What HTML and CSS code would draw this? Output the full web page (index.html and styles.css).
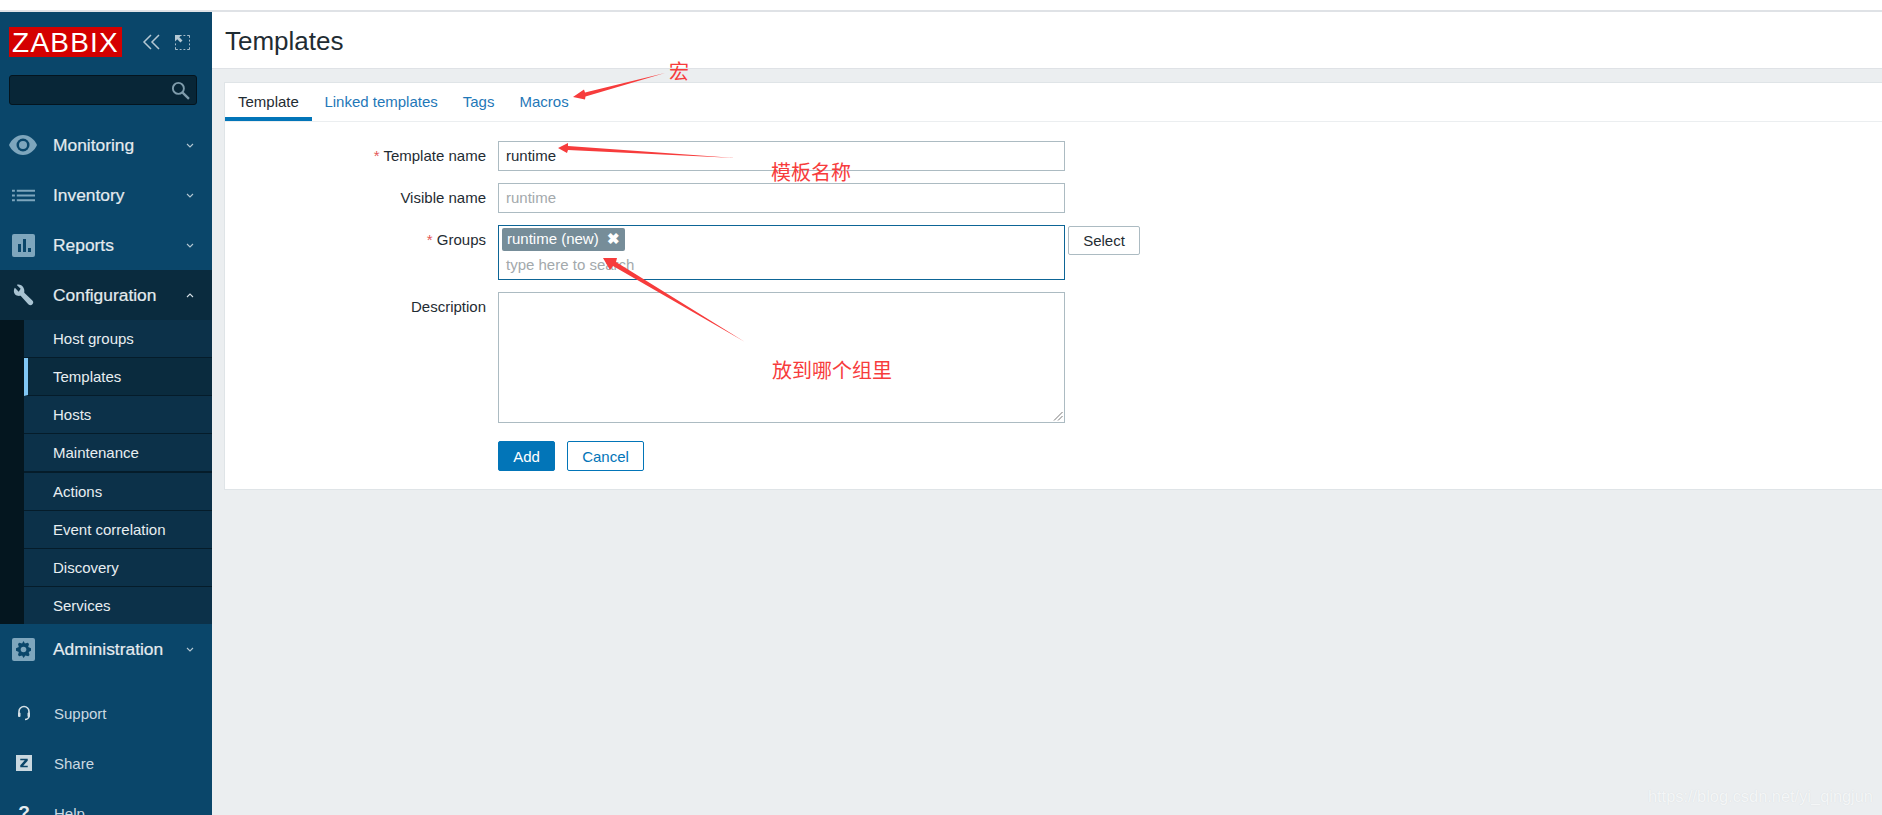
FILE: index.html
```html
<!DOCTYPE html>
<html>
<head>
    <title>Templates</title>
    <link rel="stylesheet" href="styles.css">
</head>
<body>
    <div class="top-strip"></div>
    <div class="layout">
        <!-- sidebar -->
        <div class="sidebar">
            <div class="brand">
                <span class="logo">ZABBIX</span>
                <svg class="brand-icon collapse" viewBox="0 0 20 16"><path d="M9 1 2 8 9 15M17 1 10 8 17 15" fill="none" stroke="#b5c8d3" stroke-width="1.500"/></svg>
                <svg class="brand-icon expand" viewBox="0 0 16 16"><path d="M5 .5h2M9 .5h2M13 .5h2.500V3M15.500 5v2M15.500 9v2M15.500 13v2.500H13M11 15.500H9M7 15.500H5M3 15.500H.5V13M.5 11V9" fill="none" stroke="#b5c8d3"/><path d="M0 0h7L4.600 2.400 8 5.800 5.800 8 2.400 4.600 0 7z" fill="#b5c8d3"/></svg>
            </div>
            <div class="search">
                <svg viewBox="0 0 18 18"><circle cx="7" cy="7" r="5.200" fill="none" stroke="#7f9cac" stroke-width="1.800"/><path d="m11 11 6 6" stroke="#7f9cac" stroke-width="2.200"/></svg>
            </div>

            <div class="nav-item first">
                <svg class="nav-icon" viewBox="0 0 28 20"><path d="M14 0C7.500 0 2.500 4.500 0 10c2.500 5.500 7.500 10 14 10s11.500-4.500 14-10C25.500 4.500 20.500 0 14 0z" fill="#7ea6bd"/><circle cx="14" cy="10" r="6.500" fill="#0a466a"/><circle cx="14" cy="10" r="4" fill="#7ea6bd"/></svg>
                <span class="nav-label">Monitoring</span>
                <svg class="chev" viewBox="0 0 8 5"><path d="m1 1 3 3 3-3" fill="none" stroke="#b5c8d3" stroke-width="1.100"/></svg>
            </div>
            <div class="nav-item">
                <svg class="nav-icon square" viewBox="0 0 24 14"><path d="M0 1h3v2H0zM0 6h3v2H0zM0 11h3v2H0zM5 1h19v2H5zM5 6h19v2H5zM5 11h19v2H5z" fill="#7ea6bd"/></svg>
                <span class="nav-label">Inventory</span>
                <svg class="chev" viewBox="0 0 8 5"><path d="m1 1 3 3 3-3" fill="none" stroke="#b5c8d3" stroke-width="1.100"/></svg>
            </div>
            <div class="nav-item">
                <svg class="nav-icon square" viewBox="0 0 23 23"><rect width="23" height="23" rx="2" fill="#7ea6bd"/><path d="M6 10h3v8H6zM11 5h3v13h-3zM16 14h3v4h-3z" fill="#0a466a"/></svg>
                <span class="nav-label">Reports</span>
                <svg class="chev" viewBox="0 0 8 5"><path d="m1 1 3 3 3-3" fill="none" stroke="#b5c8d3" stroke-width="1.100"/></svg>
            </div>
            <div class="nav-item open">
                <svg class="nav-icon square" viewBox="0 0 24 24"><path d="M5 1 9 5 7 8 3 4C1 7 2 11 5 12c2 .7 3 .3 4 .3L17 21c1.500 1.500 3 1.500 4.300.2 1.200-1.200 1.200-2.800-.3-4.200l-8.200-8c0-1 .4-3-.8-5C10.500 1 7 0 5 1z" fill="#a9c4d3"/></svg>
                <span class="nav-label">Configuration</span>
                <svg class="chev" viewBox="0 0 8 5"><path d="m1 4 3-3 3 3" fill="none" stroke="#d5e0e6" stroke-width="1.100"/></svg>
            </div>
            <div class="sub-menu">
                <div class="sub-item">Host groups</div>
                <div class="sub-item active">Templates</div>
                <div class="sub-item">Hosts</div>
                <div class="sub-item">Maintenance</div>
                <div class="sub-item">Actions</div>
                <div class="sub-item">Event correlation</div>
                <div class="sub-item">Discovery</div>
                <div class="sub-item">Services</div>
            </div>
            <div class="nav-item admin">
                <svg class="nav-icon square" viewBox="0 0 23 23"><rect width="23" height="23" rx="2" fill="#7ea6bd"/><path d="M11.500 3l1.400 2.600 2.900-.8 1.200 1.200-.8 2.900L19 10.300v2.400l-2.300 1.400.8 2.900-1.200 1.200-2.900-.8L11.500 20l-1.400-2.600-2.900.8L6 17l.8-2.900L4 12.700v-2.400l2.800-1.400L6 6l1.200-1.200 2.900.8z" fill="#0a466a"/><circle cx="11.500" cy="11.500" r="2.800" fill="#7ea6bd"/></svg>
                <span class="nav-label">Administration</span>
                <svg class="chev" viewBox="0 0 8 5"><path d="m1 1 3 3 3-3" fill="none" stroke="#b5c8d3" stroke-width="1.100"/></svg>
            </div>

            <div class="foot-links">
                <div class="foot-item">
                    <svg class="foot-icon" viewBox="0 0 14 16"><path d="M2 9V6.500a5 5 0 0 1 10 0V9M12 11c0 2-2 3.500-4 3.500" fill="none" stroke="#d5e0e6" stroke-width="1.600"/><rect x="1" y="7.500" width="2.500" height="4.500" rx="1" fill="#d5e0e6"/><rect x="10.500" y="7.500" width="2.500" height="4.500" rx="1" fill="#d5e0e6"/></svg>
                    <span>Support</span>
                </div>
                <div class="foot-item">
                    <svg class="foot-icon" viewBox="0 0 15 15"><rect width="15" height="15" fill="#c9d8e0"/><path d="M4 3.500h7v1.800L6.800 10H11v1.500H4V9.700L8.200 5H4z" fill="#0a466a"/></svg>
                    <span>Share</span>
                </div>
                <div class="foot-item">
                    <span class="foot-icon help">?</span>
                    <span>Help</span>
                </div>
            </div>
        </div>

        <!-- main -->
        <div class="main">
            <div class="page-head"><h1>Templates</h1></div>
            <div class="card">
                <div class="tabs">
                    <a class="tab active">Template</a>
                    <a class="tab">Linked templates</a>
                    <a class="tab">Tags</a>
                    <a class="tab">Macros</a>
                </div>
                <div class="form">
                    <div class="row">
                        <label><i>*</i> Template name</label>
                        <div class="field">runtime</div>
                    </div>
                    <div class="row">
                        <label>Visible name</label>
                        <div class="field muted">runtime</div>
                    </div>
                    <div class="row">
                        <label><i>*</i> Groups</label>
                        <div class="field groups">
                            <span class="chip">runtime (new) <b>✖</b></span>
                            <span class="hint">type here to search</span>
                        </div>
                        <button class="btn select">Select</button>
                    </div>
                    <div class="row">
                        <label>Description</label>
                        <div class="field area">
                            <svg class="grip" viewBox="0 0 10 10"><path d="M9.500 1 1 9.500M9.500 5 5 9.500" stroke="#555" stroke-width=".8"/></svg>
                        </div>
                    </div>
                    <div class="row actions">
                        <button class="btn primary">Add</button>
                        <button class="btn outline">Cancel</button>
                    </div>
                </div>
            </div>
        </div>
    </div>

    <!-- red notes drawn on top of the screenshot -->
    <svg class="notes" viewBox="0 0 1882 815">
        <path d="M665 73 585 92.500 584 89.500 573 97 585 99.500 585.500 96.500z" fill="#f73c3c"/>
        <path d="M735 158 568 146 568 143 558 148 567 153 568 150z" fill="#f73c3c"/>
        <path d="M745 342 613 266 610 270 603 258 617 258 616 262z" fill="#f73c3c"/>
    </svg>
    <span class="note n1">宏</span>
    <span class="note n2">模板名称</span>
    <span class="note n3">放到哪个组里</span>
    <span class="watermark">https://blog.csdn.net/yi_qingjun</span>
</body>
</html>
```
FILE: styles.css
```css
html, body {
    margin: 0;
    padding: 0;
    height: 815px;
    overflow: hidden;
}

body {
    position: relative;
    font-family: "Liberation Sans", Arial, sans-serif;
    font-size: 15px;
    color: #1f2c33;
    background: #ebeef0;
}

.top-strip {
    height: 10px;
    background: #fff;
    border-bottom: 2px solid #dfe2e6;
}

.layout {
    display: flex;
    height: 803px;
}

/* sidebar */
.sidebar {
    width: 212px;
    flex: none;
    background: #0a466a;
    color: #e4ebef;
    overflow: hidden;
}

.brand {
    display: flex;
    align-items: center;
    padding: 15px 0 0 9px;
    height: 30px;
}

.logo {
    width: 113px;
    height: 30px;
    line-height: 31px;
    text-align: center;
    background: #d40000;
    color: #fff;
    font-size: 28px;
    letter-spacing: 1.2px;
}

.brand-icon.collapse {
    width: 20px;
    height: 16px;
    margin-left: 20px;
}

.brand-icon.expand {
    width: 15px;
    height: 15px;
    margin-left: 13px;
}

.search {
    display: flex;
    align-items: center;
    justify-content: flex-end;
    width: 188px;
    height: 30px;
    margin: 18px 0 0 9px;
    padding-right: 6px;
    box-sizing: border-box;
    background: #082637;
    border: 1px solid #04141e;
    border-radius: 3px;
}

.search svg {
    width: 19px;
    height: 19px;
}

.nav-item {
    display: flex;
    align-items: center;
    height: 50px;
    font-size: 17.4px;
    -webkit-text-stroke: .2px;
}

.nav-item.first {
    margin-top: 15px;
}

.nav-item.open {
    background: #0a2b3e;
}

.nav-icon {
    width: 28px;
    height: 20px;
    margin-left: 9px;
    flex: none;
}

.nav-icon.square {
    width: 23px;
    height: 23px;
    margin-left: 12px;
    margin-right: 2px;
}

.nav-label {
    margin-left: 16px;
    flex: 1;
}

.chev {
    width: 8px;
    height: 5px;
    margin-right: 18px;
}

.sub-menu {
    padding-left: 24px;
    background: #04161f;
}

.sub-item {
    height: 37px;
    line-height: 37px;
    padding-left: 29px;
    background: #0c3149;
    border-bottom: 1px solid #051c2a;
    color: #e8eef1;
}

.sub-item:nth-child(5) {
    border-top: 1px solid #051c2a;
}

.sub-item:last-child {
    height: 37px;
    border-bottom: 0;
}

.sub-item.active {
    background: #0a2b3e;
    padding-left: 25px;
    border-left: 4px solid #80c7f5;
}

.foot-links {
    margin-top: 14px;
}

.foot-item {
    display: flex;
    align-items: center;
    height: 50px;
    color: #cbd9e1;
}

.foot-icon {
    width: 16px;
    height: 16px;
    margin: 0 22px 0 16px;
    flex: none;
    text-align: center;
}

.foot-icon.help {
    font-size: 19px;
    font-weight: bold;
    line-height: 16px;
    color: #e4ebef;
}

/* main area */
.main {
    flex: 1;
    min-width: 0;
}

.page-head {
    height: 57px;
    background: #fff;
    border-bottom: 1px solid #dfe2e6;
    box-sizing: border-box;
    padding-left: 13px;
}

.page-head h1 {
    margin: 0;
    font-weight: normal;
    font-size: 26px;
    line-height: 58px;
    color: #1f2c33;
}

.card {
    margin: 13px 0 0 12px;
    height: 408px;
    box-sizing: border-box;
    background: #fff;
    border: 1px solid #dfe4e7;
    border-right: 0;
}

.tabs {
    display: flex;
    height: 38px;
    border-bottom: 1px solid #ebeef0;
}

.tab {
    padding: 0 12.5px;
    line-height: 38px;
    height: 38px;
    box-sizing: border-box;
    color: #1f78b8;
}

.tab.active {
    padding: 0 13px;
    color: #1f2c33;
    border-bottom: 4px solid #0275b8;
}

.form {
    padding-top: 19px;
}

.row {
    display: flex;
    align-items: flex-start;
    margin-bottom: 12px;
}

.row label {
    width: 261px;
    flex: none;
    text-align: right;
    line-height: 30px;
    margin-right: 12px;
}

.row label i {
    color: #e45959;
    font-style: normal;
}

.field {
    width: 567px;
    height: 30px;
    box-sizing: border-box;
    border: 1px solid #acbbc2;
    padding: 0 7px;
    line-height: 28px;
    color: #1f2c33;
}

.field.muted {
    color: #a3a9ac;
}

.field.groups {
    height: 55px;
    padding: 2px 3px 0;
    border-color: #0d6596;
    line-height: normal;
}

.chip {
    display: block;
    width: max-content;
    height: 23px;
    line-height: 22px;
    padding: 0 5px;
    background: #768d99;
    color: #fff;
    border-radius: 2px;
}

.chip b {
    margin-left: 4px;
    font-size: 15px;
}

.hint {
    display: block;
    margin: 5px 0 0 4px;
    color: #a3a9ac;
}

.field.area {
    position: relative;
    height: 131px;
}

.grip {
    position: absolute;
    right: 1px;
    bottom: 1px;
    width: 10px;
    height: 10px;
}

.btn {
    font: inherit;
    height: 30px;
    box-sizing: border-box;
    border-radius: 2px;
    padding: 0;
    background: #fff;
}

.btn.select {
    width: 72px;
    height: 29px;
    margin: 1px 0 0 3px;
    border: 1px solid #acbbc2;
    color: #1f2c33;
}

.actions {
    padding-left: 273px;
    margin-top: 18px;
}

.btn.primary {
    width: 57px;
    background: #0275b8;
    border: 1px solid #0275b8;
    color: #fff;
}

.btn.outline {
    width: 77px;
    margin-left: 12px;
    border: 1px solid #0275b8;
    color: #0275b8;
}

/* annotations */
.notes {
    position: absolute;
    left: 0;
    top: 0;
    width: 1882px;
    height: 815px;
    pointer-events: none;
}

.note {
    position: absolute;
    font-family: "Noto Sans CJK SC", sans-serif;
    font-size: 20px;
    line-height: 24px;
    color: #f73c3c;
}

.n1 {
    left: 669px;
    top: 59px;
}

.n2 {
    left: 771px;
    top: 160px;
}

.n3 {
    left: 772px;
    top: 358px;
}

.watermark {
    position: absolute;
    right: 9px;
    top: 787px;
    font-size: 16.4px;
    color: #f4f6f7;
    text-shadow: 0 0 1px #d5d9dc;
}
```
